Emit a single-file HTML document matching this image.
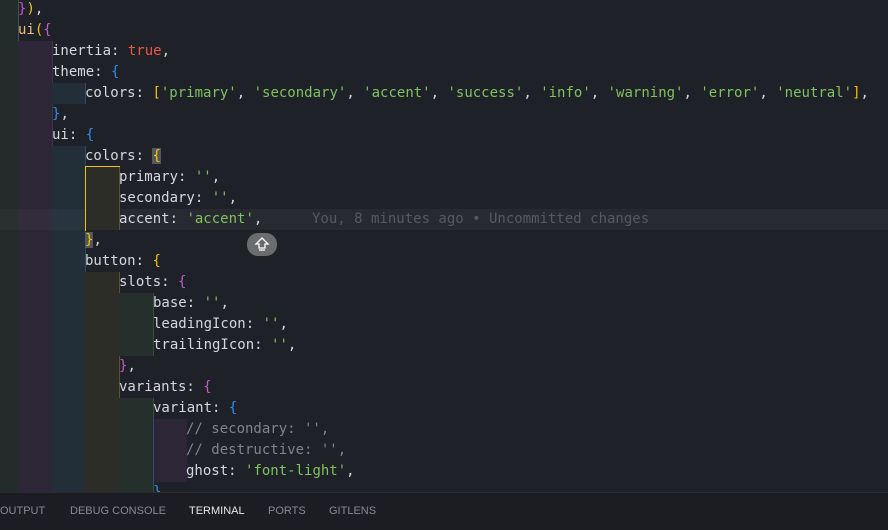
<!DOCTYPE html>
<html><head><meta charset="utf-8"><style>
body{margin:0;width:888px;height:529px;overflow:hidden;background:#1f2129;position:relative;font-family:"DejaVu Sans Mono","Liberation Mono",monospace;font-size:14px;color:#d5d7dc}
.l{position:absolute;left:0;height:21px;line-height:21px;white-space:pre;width:888px}
.b{position:absolute;top:0;height:21px}
.t{position:absolute;top:0}
.g0{left:0;width:18px;background:#242c2b;border-right:1px solid #4a4f55}
.g1{left:18px;width:34px;background:#2d2637;border-right:1px solid #3d3550}
.g2{left:52px;width:33px;background:#222f38;border-right:1px solid #2c4a63}
.g3{left:85px;width:34px;background:#2c2d26;border-right:1px solid #5a5230}
.g4{left:119px;width:34px;background:#252f2c;border-right:1px solid #3a4a44}
.g5{left:153px;width:33px;background:#2d2637;border-left:1px solid #2c4a80}
.s{color:#7ec35c}.y{color:#f4c20d}.m{color:#c657c4}.bl{color:#2f8ee8}.r{color:#f0553f}.c{color:#7f848e}.fn{color:#e5c07b}
.panel{position:absolute;left:0;top:492px;width:888px;height:37px;background:#1b1d22;border-top:1px solid #2a2c32;font-family:"Liberation Sans",sans-serif;font-size:11px;color:#868a92}
.panel span{position:absolute;top:12px}
</style></head><body>
<div class="l" style="top:-1px"><div class="b g0"></div><span class="t" style="left:18px"><span class="m">}</span><span class="y">)</span>,</span></div>
<div class="l" style="top:20px"><div class="b g0"></div><span class="t" style="left:18px"><span class="fn">ui</span><span class="y">(</span><span class="m">{</span></span></div>
<div class="l" style="top:41px"><div class="b g0"></div><div class="b g1"></div><span class="t" style="left:52px">inertia: <span class="r">true</span>,</span></div>
<div class="l" style="top:62px"><div class="b g0"></div><div class="b g1"></div><span class="t" style="left:52px">theme: <span class="bl">{</span></span></div>
<div class="l" style="top:83px"><div class="b g0"></div><div class="b g1"></div><div class="b g2"></div><span class="t" style="left:85px">colors: <span class="y">[</span><span class="s">'primary'</span>, <span class="s">'secondary'</span>, <span class="s">'accent'</span>, <span class="s">'success'</span>, <span class="s">'info'</span>, <span class="s">'warning'</span>, <span class="s">'error'</span>, <span class="s">'neutral'</span><span class="y">]</span>,</span></div>
<div class="l" style="top:104px"><div class="b g0"></div><div class="b g1"></div><span class="t" style="left:52px"><span class="bl">}</span>,</span></div>
<div class="l" style="top:125px"><div class="b g0"></div><div class="b g1"></div><span class="t" style="left:52px">ui: <span class="bl">{</span></span></div>
<div class="l" style="top:146px"><div class="b g0"></div><div class="b g1"></div><div class="b g2"></div><span class="t" style="left:85px">colors: <span class="y" style="background:#55575c">{</span></span></div>
<div class="l" style="top:167px"><div class="b g0"></div><div class="b g1"></div><div class="b g2"></div><div class="b g3"></div><span class="t" style="left:119px">primary: <span class="s">''</span>,</span></div>
<div class="l" style="top:188px"><div class="b g0"></div><div class="b g1"></div><div class="b g2"></div><div class="b g3"></div><span class="t" style="left:119px">secondary: <span class="s">''</span>,</span></div>
<div class="l" style="top:209px;background:#282a31"><div class="b g0" style="background:#2a302f"></div><div class="b g1" style="background:#332c3d"></div><div class="b g2" style="background:#283440"></div><div class="b g3"></div><span class="t" style="left:119px">accent: <span class="s">'accent'</span>,</span><span class="t" style="left:312px;color:#555962">You, 8 minutes ago • Uncommitted changes</span></div>
<div class="l" style="top:230px"><div class="b g0"></div><div class="b g1"></div><div class="b g2"></div><span class="t" style="left:85px"><span class="y" style="background:#55575c">}</span>,</span></div>
<div style="position:absolute;left:85px;top:166px;width:34px;height:64px;border-top:1px solid #f4c20d;border-left:1px solid #f4c20d"></div>
<div class="l" style="top:251px"><div class="b g0"></div><div class="b g1"></div><div class="b g2"></div><span class="t" style="left:85px">button: <span class="y">{</span></span></div>
<div class="l" style="top:272px"><div class="b g0"></div><div class="b g1"></div><div class="b g2"></div><div class="b g3"></div><span class="t" style="left:119px">slots: <span class="m">{</span></span></div>
<div class="l" style="top:293px"><div class="b g0"></div><div class="b g1"></div><div class="b g2"></div><div class="b g3"></div><div class="b g4"></div><span class="t" style="left:153px">base: <span class="s">''</span>,</span></div>
<div class="l" style="top:314px"><div class="b g0"></div><div class="b g1"></div><div class="b g2"></div><div class="b g3"></div><div class="b g4"></div><span class="t" style="left:153px">leadingIcon: <span class="s">''</span>,</span></div>
<div class="l" style="top:335px"><div class="b g0"></div><div class="b g1"></div><div class="b g2"></div><div class="b g3"></div><div class="b g4"></div><span class="t" style="left:153px">trailingIcon: <span class="s">''</span>,</span></div>
<div class="l" style="top:356px"><div class="b g0"></div><div class="b g1"></div><div class="b g2"></div><div class="b g3"></div><span class="t" style="left:119px"><span class="m">}</span>,</span></div>
<div class="l" style="top:377px"><div class="b g0"></div><div class="b g1"></div><div class="b g2"></div><div class="b g3"></div><span class="t" style="left:119px">variants: <span class="m">{</span></span></div>
<div class="l" style="top:398px"><div class="b g0"></div><div class="b g1"></div><div class="b g2"></div><div class="b g3"></div><div class="b g4"></div><span class="t" style="left:153px">variant: <span class="bl">{</span></span></div>
<div class="l" style="top:419px"><div class="b g0"></div><div class="b g1"></div><div class="b g2"></div><div class="b g3"></div><div class="b g4"></div><div class="b g5"></div><span class="t c" style="left:186px">// secondary: '',</span></div>
<div class="l" style="top:440px"><div class="b g0"></div><div class="b g1"></div><div class="b g2"></div><div class="b g3"></div><div class="b g4"></div><div class="b g5"></div><span class="t c" style="left:186px">// destructive: '',</span></div>
<div class="l" style="top:461px"><div class="b g0"></div><div class="b g1"></div><div class="b g2"></div><div class="b g3"></div><div class="b g4"></div><div class="b g5"></div><span class="t" style="left:186px">ghost: <span class="s">'font-light'</span>,</span></div>
<div class="l" style="top:482px"><div class="b g0"></div><div class="b g1"></div><div class="b g2"></div><div class="b g3"></div><div class="b g4"></div><span class="t" style="left:153px"><span class="bl">}</span></span></div>
<div style="position:absolute;left:247px;top:233px;width:30px;height:23px;border-radius:11px;background:#6b6c6e"><svg width="30" height="23" viewBox="0 0 30 23"><path d="M15 5 L21 11 L18 11 L18 15 L12 15 L12 11 L9 11 Z" fill="none" stroke="#fff" stroke-width="1.3"/><path d="M12 17 H18" stroke="#fff" stroke-width="1.3"/></svg></div>
<div class="panel"><span style="left:0">OUTPUT</span><span style="left:70px">DEBUG CONSOLE</span><span style="left:189px;color:#e8e8e8">TERMINAL</span><span style="left:268px">PORTS</span><span style="left:329px">GITLENS</span></div>
</body></html>
